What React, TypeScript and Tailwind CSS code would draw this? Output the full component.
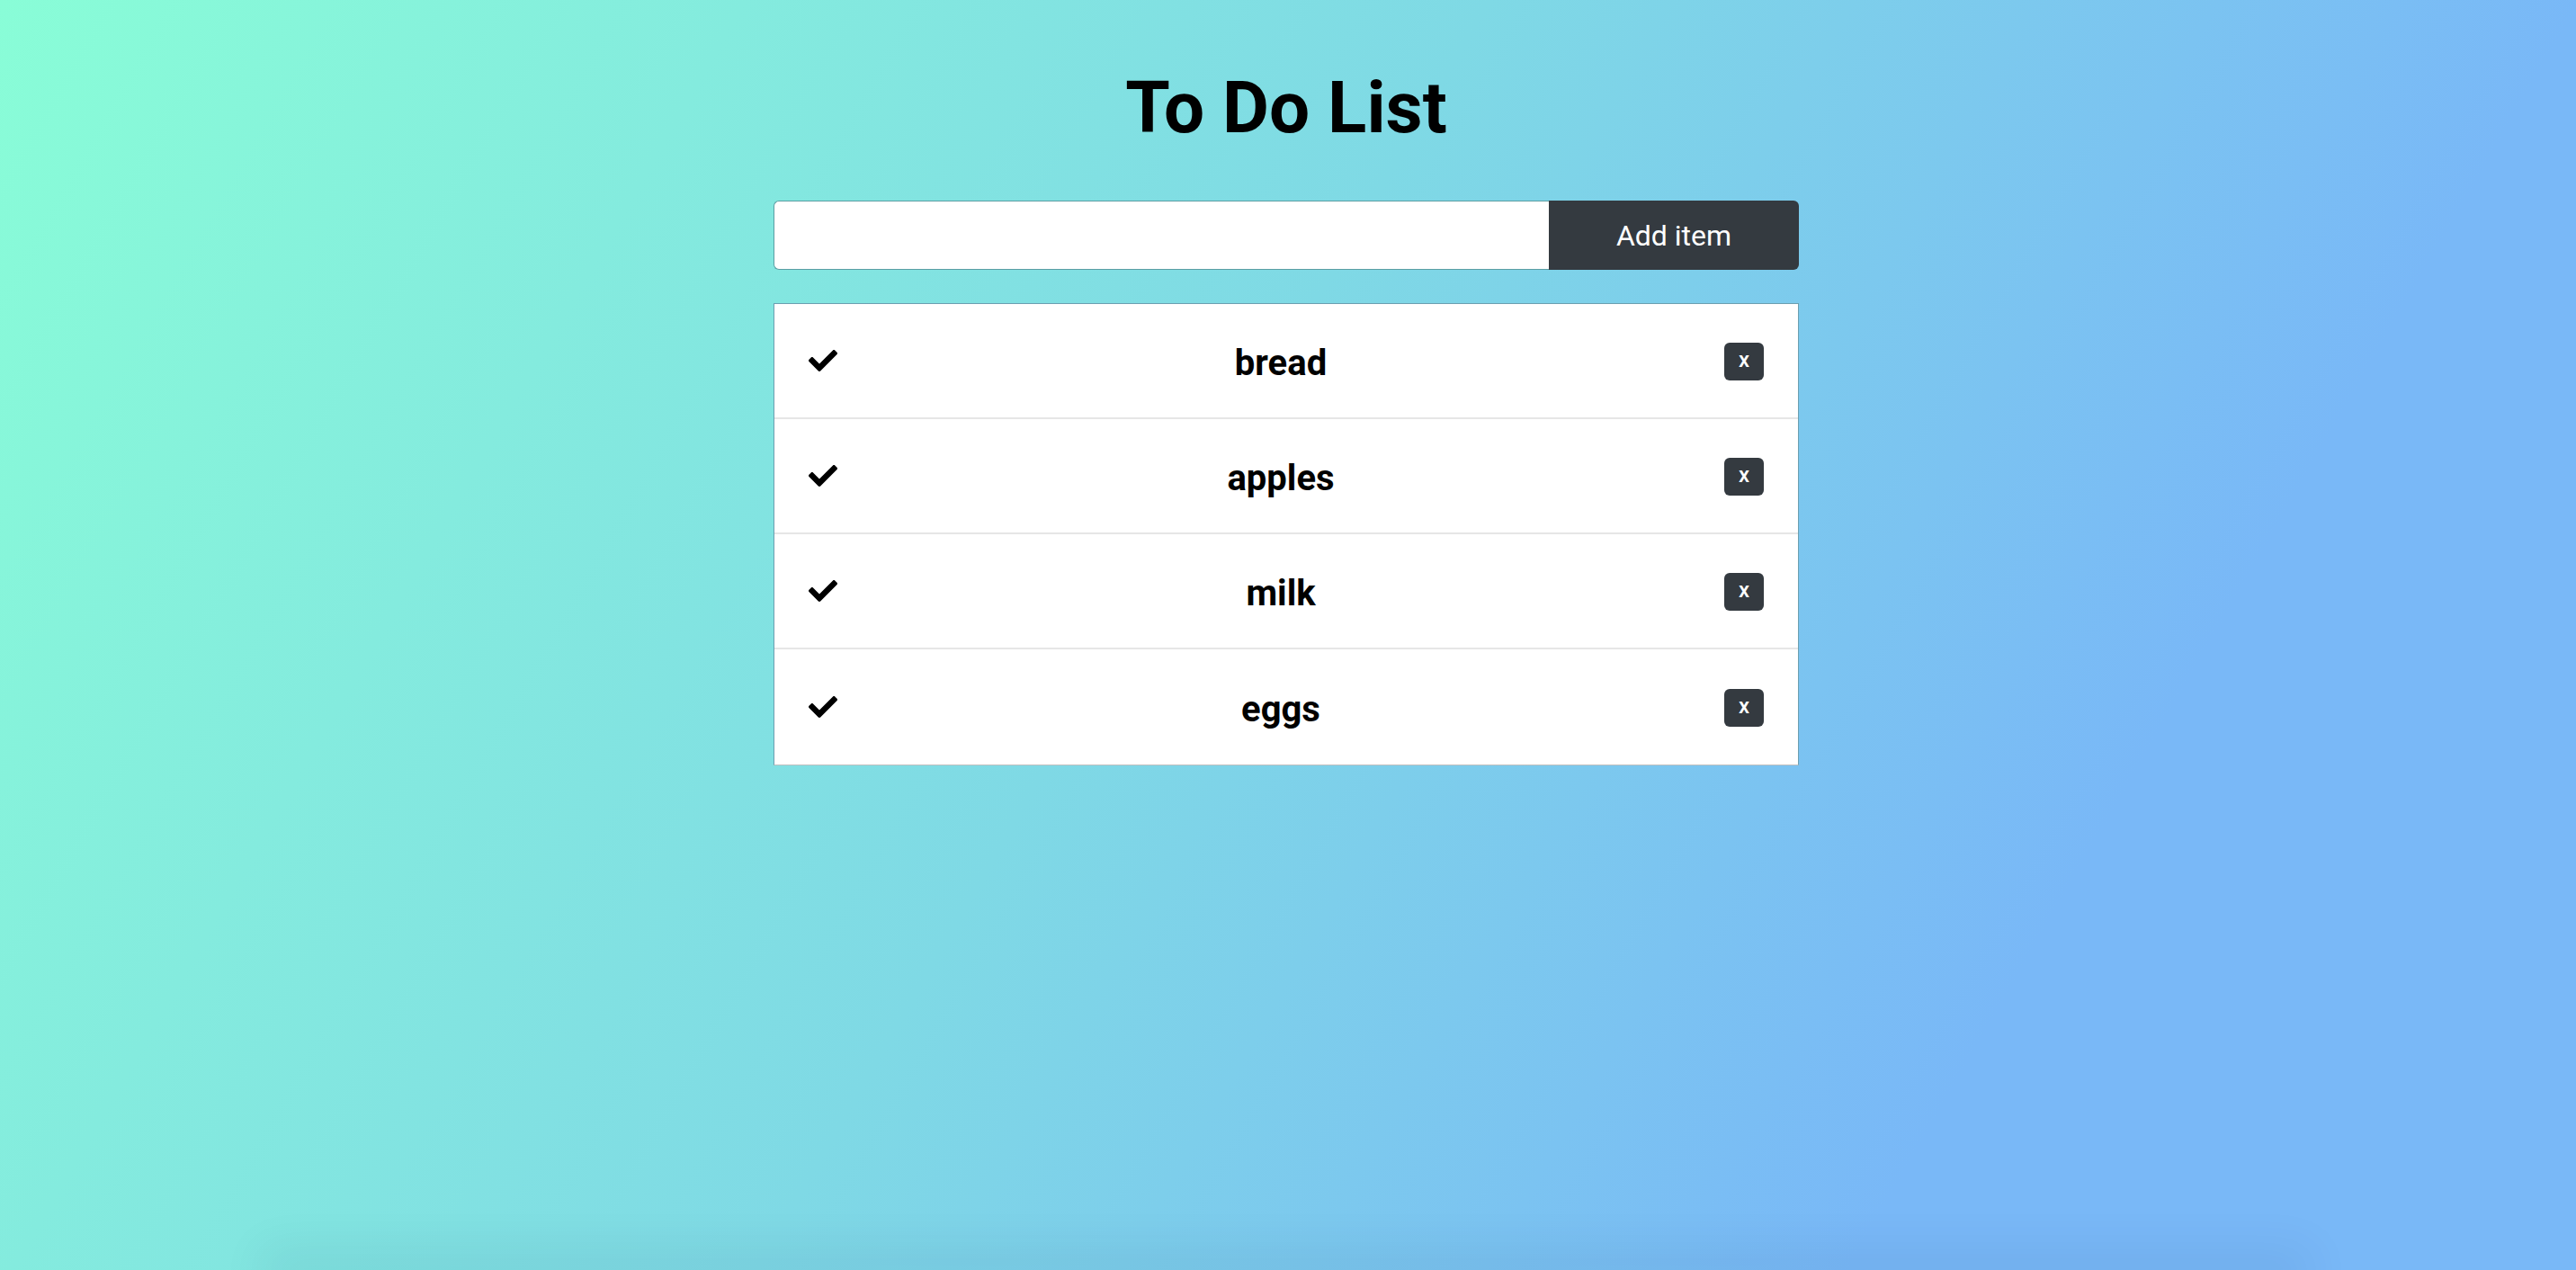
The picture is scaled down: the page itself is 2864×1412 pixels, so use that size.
import React from "react";

const items = ["bread", "apples", "milk", "eggs"];

function Check() {
  return (
    <svg width="32" height="24" viewBox="0 65 512 382" className="shrink-0">
      <path
        fill="#000"
        d="M173.898 439.404l-166.4-166.4c-9.997-9.997-9.997-26.206 0-36.204l36.203-36.204c9.997-9.998 26.207-9.998 36.204 0L192 312.69 432.095 72.596c9.997-9.997 26.207-9.997 36.204 0l36.203 36.204c9.997 9.997 9.997 26.206 0 36.204l-294.4 294.401c-9.998 9.997-26.207 9.997-36.204-.001z"
      />
    </svg>
  );
}

export default function App() {
  return (
    <div className="h-[1412px] w-full overflow-hidden flex flex-col items-center pr-[4px] bg-[linear-gradient(120deg,#89fdd7_0%,#7fd9e5_45%,#79b8f7_78%)] font-['Roboto',sans-serif]">
      <h1 className="mt-[80px] text-[80px] leading-[80px] font-bold text-black">To Do List</h1>
      <div className="mt-[63px] w-[1140px] h-[77px] flex">
        <input
          className="flex-1 h-full bg-white border border-[#5b9ea3] border-r-0 rounded-l-[6px] outline-none px-4 text-[32px]"
          type="text"
        />
        <button className="w-[278px] h-full bg-[#343a40] text-white text-[32px] rounded-r-[6px] font-['Roboto',sans-serif]">
          Add item
        </button>
      </div>
      <div className="mt-[37px] w-[1140px] bg-white border border-[#6b9fb0] border-b-[#bfbfbf] flex flex-col">
        {items.map((it, i) => (
          <div
            key={it}
            className={
              "h-[128px] flex items-center justify-between pl-[38px] pr-[38px] " +
              (i < items.length - 1 ? "border-b-2 border-[#e6e6e6]" : "")
            }
          >
            <Check />
            <span className="text-[40px] font-bold text-black pt-[6px]">{it}</span>
            <button className="w-[44px] h-[42px] mt-[2px] rounded-[6px] bg-[#343a40] text-white text-[24px] font-medium leading-none flex items-center justify-center pb-[4px]">
              x
            </button>
          </div>
        ))}
      </div>
      <div className="flex-1" />
      <div className="w-[2230px] h-0 shadow-[0_0_50px_24px_rgba(0,40,80,0.07)]" />
    </div>
  );
}
